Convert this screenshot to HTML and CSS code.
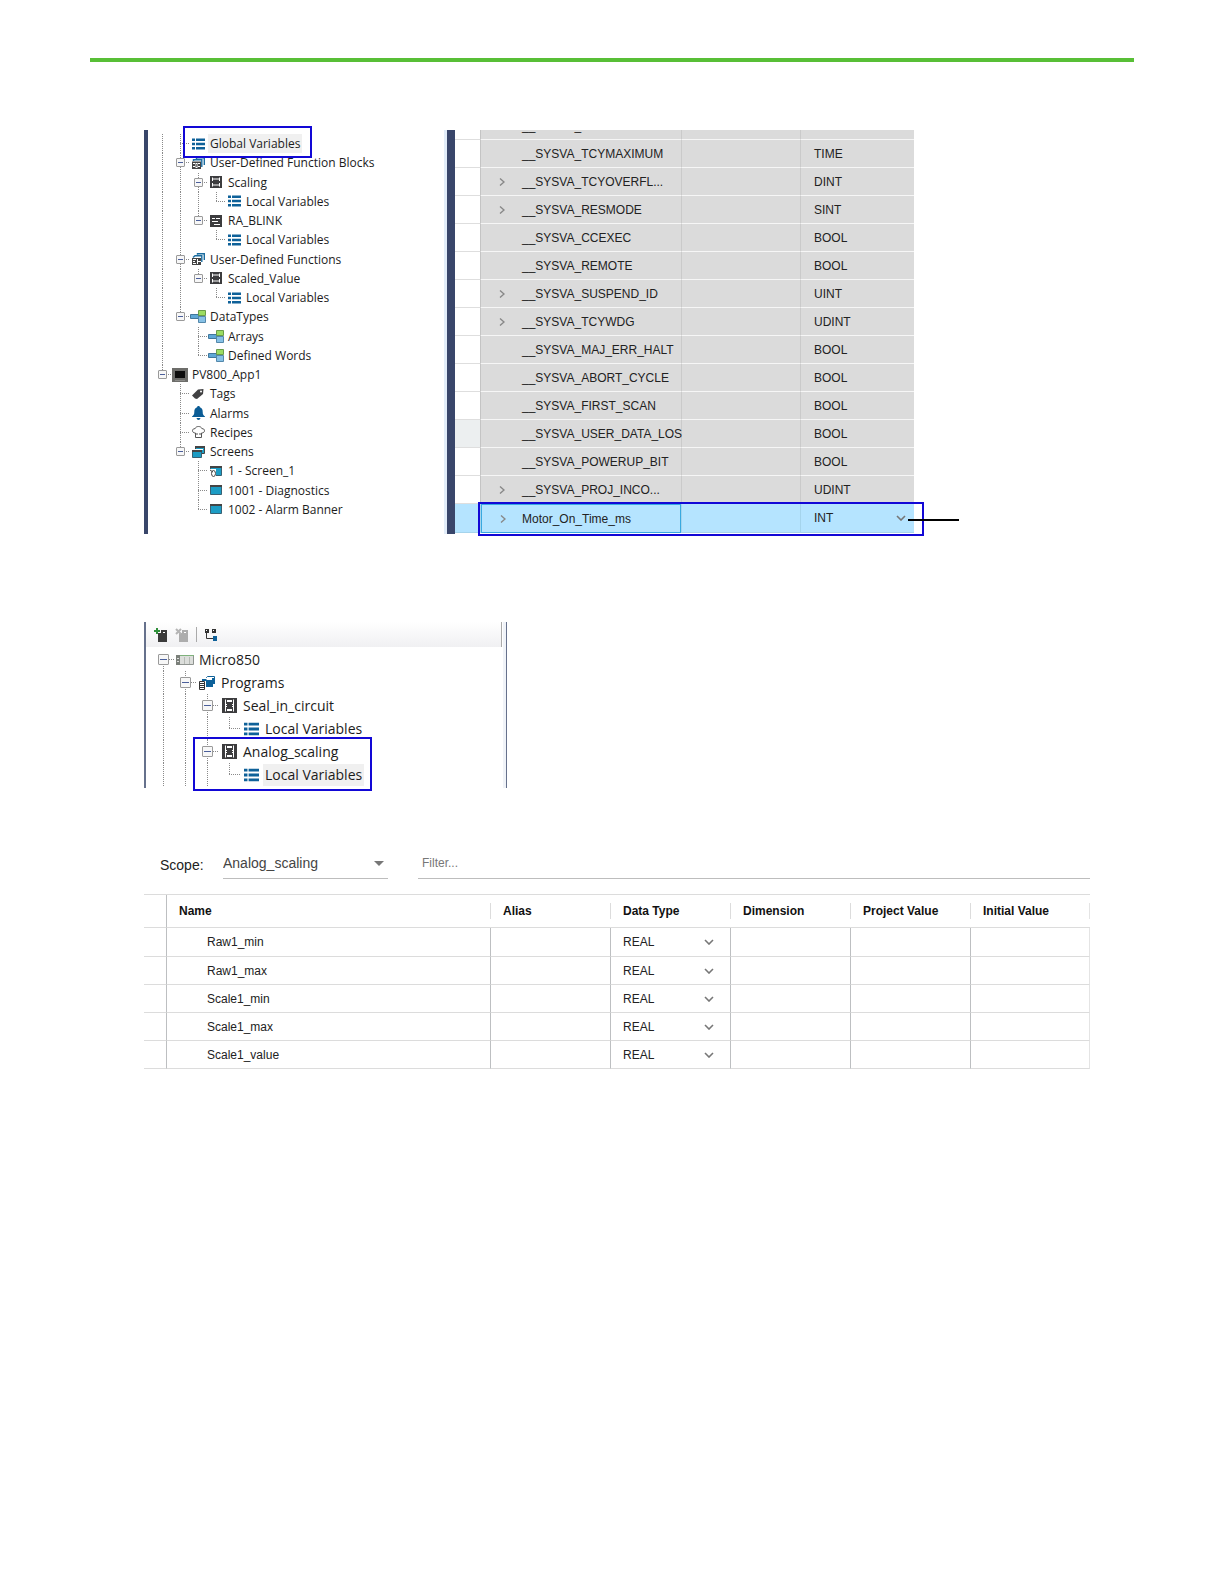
FILE: index.html
```html
<!DOCTYPE html>
<html lang="en">
<head>
  <meta charset="UTF-8">
  <title>Variables</title>
  <link rel="stylesheet" href="styles.css">
</head>
<body>

<!-- icon set -->
<svg class="defs" aria-hidden="true">
  <symbol id="vars" viewBox="0 0 13 12">
    <path fill="#0e6199" d="M0 .500h3V3H0zM4 .500h9V3H4zM0 4.800h3v2.500H0zM4 4.800h9v2.500H4zM0 9h3v2.500H0zM4 9h9v2.500H4z"/>
  </symbol>
  <symbol id="ladder" viewBox="0 0 12 12">
    <path fill="#3c3c3e" d="M0 0h12v12H0z"/>
    <path fill="none" stroke="#fff" d="M2.500 1.500v3.500M9.500 1.500v3.500M2.500 7v3.500M9.500 7v3.500M2.500 3h7M2.500 9h7"/>
  </symbol>
  <symbol id="ladder-large" viewBox="0 0 15 15">
    <path fill="#3c3c3e" d="M0 0h15v15H0z"/>
    <path fill="none" stroke="#fff" d="M3.500 1.500v12M11.500 1.500v12"/>
    <path fill="#fff" d="M5 2h5v2H5zM5 11h5v2H5z"/>
    <path stroke="#fff" d="M4 6.500h1M10 6.500h1M4 8.500h1M10 8.500h1"/>
  </symbol>
  <symbol id="text" viewBox="0 0 12 12">
    <path fill="#3c3c3e" d="M0 0h12v12H0z"/>
    <path stroke="#fff" d="M2 3.500h3M6 3.500h4M2 6.500h6M4 9.500h6"/>
  </symbol>
  <symbol id="blocks" viewBox="0 0 13 12">
    <path fill="none" stroke="#1b6c9f" stroke-width="1.400" d="M4.500 2V.700h7.800V8"/>
    <path fill="none" stroke="#1b6c9f" stroke-width="1.400" d="M1.500 4V2.700h8.300V10"/>
    <path fill="#444" d="M0 4.500h9V12H0z"/>
    <path fill="#fff" d="M1 6h2v1H1zM6 6h2v1H6zM1 9h2v1H1zM6 9h2v1H6zM3.500 6h2v5h-2z"/>
    <path fill="#444" d="M4.200 7h.700v3h-.700z"/>
  </symbol>
  <symbol id="functions" viewBox="0 0 13 12">
    <path fill="none" stroke="#1b6c9f" stroke-width="1.400" d="M5.500 1.700V.700h6.800V7"/>
    <path fill="none" stroke="#1b6c9f" stroke-width="1.400" d="M1 4.500 3 2.700h6.800V9"/>
    <path fill="#444" d="M0 5h9v7H0z"/>
    <path fill="none" stroke="#fff" d="M1 6.500h3M1 8.500h2M1 10.500h3M5.500 6v5M6 8.500h3"/>
  </symbol>
  <symbol id="programs" viewBox="0 0 16 14">
    <path fill="none" stroke="#0e6199" d="M7.500 2V1.500l1-1h7V8"/>
    <path fill="#0e6199" d="M3 3h4l1 1h6v7H7V5H3zM13 2h2v6h-1V4h-1z"/>
    <path fill="#fff" stroke="#333" d="M.500 5.500h5v8h-5z"/>
    <path stroke="#333" d="M1 7.500h4M1 9.500h4M1 11.500h4"/>
  </symbol>
  <symbol id="types" viewBox="0 0 16 13">
    <path fill="none" stroke="#777" d="M7 5.500h3M8.500 3v7"/>
    <path fill="#5fa8d6" stroke="#41779c" d="M.500 4.500h8v4h-8z"/>
    <path fill="#9bdc62" stroke="#6a9c4a" d="M8.500.500h7v5h-7z"/>
    <path fill="#86c1e6" stroke="#5488ab" d="M8.500 6.500h7v6h-7z"/>
  </symbol>
  <symbol id="panel" viewBox="0 0 16 14">
    <path fill="#6d6d6a" d="M0 0h16v14H0z"/>
    <path fill="#0c0c0c" d="M3 3h10v7H3z"/>
    <path stroke="#8b8b88" d="M3 12.500h10"/>
  </symbol>
  <symbol id="tag" viewBox="0 0 12 12">
    <path fill="#414143" d="M11.500 1 11 6 5 11 3 10.500 0 7.500 6 1.500z"/>
    <circle cx="9" cy="3.500" r="1" fill="#fff"/>
  </symbol>
  <symbol id="bell" viewBox="0 0 13 14">
    <path fill="#0b5c95" d="M6.500 0c1 0 1.400.600 1.400 1.300C10 2 10.700 3.600 10.700 6c0 2.600.800 3.500 2.300 4.500V11H0v-.500C1.500 9.500 2.300 8.600 2.300 6c0-2.400.700-4 2.800-4.700C5.100.600 5.500 0 6.500 0zM4.500 12h4c-.300 1.300-1 2-2 2s-1.700-.700-2-2z"/>
  </symbol>
  <symbol id="chef" viewBox="0 0 13 12">
    <path fill="#fff" stroke="#555" d="M3.500 11.500V7C1.500 7 .500 6 .500 4.700.500 3.300 1.700 2.500 3 2.700 3.500 1.300 4.800.500 6.500.500S9.500 1.300 10 2.700c1.300-.200 2.500.600 2.500 2C12.500 6 11.500 7 9.500 7v4.500zM5 7v2M8 7v2"/>
  </symbol>
  <symbol id="screens" viewBox="0 0 13 12">
    <path fill="#1c9cc4" stroke="#444" d="M3.500.500h9v7h-9z"/>
    <path fill="#444" d="M3 0h10v2H3z"/>
    <path fill="#fff" d="M0 3h11v1H0z"/>
    <path fill="#1c9cc4" stroke="#376173" d="M.500 4.500h9v7h-9z"/>
    <path fill="#444" d="M0 4h10v2H0z"/>
  </symbol>
  <symbol id="screen" viewBox="0 0 12 10">
    <path fill="#1c9cc4" stroke="#376173" d="M.500.500h11v9H.500z"/>
    <path fill="#444" d="M0 0h12v2H0z"/>
  </symbol>
  <symbol id="screen-start" viewBox="0 0 12 12">
    <path fill="#1c9cc4" stroke="#376173" d="M.500 1.500h11v9H.500z"/>
    <path fill="#444" d="M0 1h12v2H0z"/>
    <path fill="#fff" d="M0 4h6v8H0z"/>
    <ellipse cx="3.500" cy="8.500" rx="2" ry="3" fill="none" stroke="#444"/>
    <path stroke="#444" d="m0 5 3 2"/>
  </symbol>
  <symbol id="controller" viewBox="0 0 18 10">
    <path fill="#dcdedb" stroke="#8f9490" d="M.500.500h17v9H.500z"/>
    <path fill="#7b807a" d="M0 0h4v10H0z"/>
    <path stroke="#7fb27c" d="M4 .500h14"/>
    <path stroke="#b6bab5" d="M8.500 2v7M13.500 2v7"/>
    <path stroke="#ddd" d="M1 3.500h2M1 6.500h2"/>
  </symbol>
  <symbol id="add" viewBox="0 0 13 14">
    <path fill="#3b3b3b" d="M4 5h3V2h6v12H4z"/>
    <path fill="#fff" d="M9 4h2v1H9z"/>
    <path fill="none" stroke="#2f8f3a" stroke-width="2" d="M3 0v6M0 3h6"/>
  </symbol>
  <symbol id="remove" viewBox="0 0 13 14">
    <path fill="#adadad" d="M4 5h3V2h6v12H4z"/>
    <path fill="#fff" d="M9 4h2v1H9z"/>
    <path fill="none" stroke="#b5b5b5" stroke-width="2" d="m1 1 5 5M6 1 1 6"/>
  </symbol>
  <symbol id="hierarchy" viewBox="0 0 12 12">
    <path fill="#333" d="M0 0h4v4H0zM7 0h4v4H7z"/>
    <path fill="#fff" d="M1 1h1v1H1zM8 1h1v1H8z"/>
    <path fill="none" stroke="#333" d="M1.500 4v5.500H8"/>
    <path fill="#0e6199" d="M8 7h4v5H8z"/>
  </symbol>
  <symbol id="right" viewBox="0 0 6 8">
    <path fill="none" stroke="#888" stroke-width="1.400" d="m1 .500 4 3.500-4 3.500"/>
  </symbol>
  <symbol id="down" viewBox="0 0 10 6">
    <path fill="none" stroke="#777" stroke-width="1.600" d="m1 1 4 4 4-4"/>
  </symbol>
  <symbol id="caret" viewBox="0 0 10 5">
    <path fill="#777" d="M0 0h10L5 5z"/>
  </symbol>
</svg>

<main class="sheet">
  <div class="rule"></div>
  <div class="content">

    <!-- global variables -->
    <section class="global">
      <div class="tree-pane">
        <ul class="tree">
          <li><i class="v"></i><i class="v h"></i><span class="icon"><svg width="13" height="12"><use href="#vars"/></svg></span><a href="#" class="selected">Global Variables</a></li>
          <li><i class="v"></i><i class="v h"><button aria-label="Collapse"></button></i><span class="icon"><svg width="13" height="12"><use href="#blocks"/></svg></span><a href="#">User-Defined Function Blocks</a></li>
          <li><i class="v"></i><i class="v"></i><i class="v h"><button aria-label="Collapse"></button></i><span class="icon"><svg width="12" height="12"><use href="#ladder"/></svg></span><a href="#">Scaling</a></li>
          <li><i class="v"></i><i class="v"></i><i class="v"></i><i class="end h"></i><span class="icon"><svg width="13" height="12"><use href="#vars"/></svg></span><a href="#">Local Variables</a></li>
          <li><i class="v"></i><i class="v"></i><i class="end h"><button aria-label="Collapse"></button></i><span class="icon"><svg width="12" height="12"><use href="#text"/></svg></span><a href="#">RA_BLINK</a></li>
          <li><i class="v"></i><i class="v"></i><i></i><i class="end h"></i><span class="icon"><svg width="13" height="12"><use href="#vars"/></svg></span><a href="#">Local Variables</a></li>
          <li><i class="v"></i><i class="v h"><button aria-label="Collapse"></button></i><span class="icon"><svg width="13" height="12"><use href="#functions"/></svg></span><a href="#">User-Defined Functions</a></li>
          <li><i class="v"></i><i class="v"></i><i class="end h"><button aria-label="Collapse"></button></i><span class="icon"><svg width="12" height="12"><use href="#ladder"/></svg></span><a href="#">Scaled_Value</a></li>
          <li><i class="v"></i><i class="v"></i><i></i><i class="end h"></i><span class="icon"><svg width="13" height="12"><use href="#vars"/></svg></span><a href="#">Local Variables</a></li>
          <li><i class="v"></i><i class="end h"><button aria-label="Collapse"></button></i><span class="icon"><svg width="16" height="13"><use href="#types"/></svg></span><a href="#">DataTypes</a></li>
          <li><i class="v"></i><i></i><i class="v h"></i><span class="icon"><svg width="16" height="13"><use href="#types"/></svg></span><a href="#">Arrays</a></li>
          <li><i class="v"></i><i></i><i class="end h"></i><span class="icon"><svg width="16" height="13"><use href="#types"/></svg></span><a href="#">Defined Words</a></li>
          <li><i class="end h"><button aria-label="Collapse"></button></i><span class="icon"><svg width="16" height="14"><use href="#panel"/></svg></span><a href="#">PV800_App1</a></li>
          <li><i></i><i class="v h"></i><span class="icon"><svg width="12" height="12"><use href="#tag"/></svg></span><a href="#">Tags</a></li>
          <li><i></i><i class="v h"></i><span class="icon"><svg width="13" height="14"><use href="#bell"/></svg></span><a href="#">Alarms</a></li>
          <li><i></i><i class="v h"></i><span class="icon"><svg width="13" height="12"><use href="#chef"/></svg></span><a href="#">Recipes</a></li>
          <li><i></i><i class="end h"><button aria-label="Collapse"></button></i><span class="icon"><svg width="13" height="12"><use href="#screens"/></svg></span><a href="#">Screens</a></li>
          <li><i></i><i></i><i class="v h"></i><span class="icon"><svg width="12" height="12"><use href="#screen-start"/></svg></span><a href="#">1 - Screen_1</a></li>
          <li><i></i><i></i><i class="v h"></i><span class="icon"><svg width="12" height="10"><use href="#screen"/></svg></span><a href="#">1001 - Diagnostics</a></li>
          <li><i></i><i></i><i class="end h"></i><span class="icon"><svg width="12" height="10"><use href="#screen"/></svg></span><a href="#">1002 - Alarm Banner</a></li>
        </ul>
      </div>

      <div class="table-pane">
        <table class="system">
          <colgroup><col class="gutter"><col class="open"><col><col class="alias"><col class="type"></colgroup>
          <tbody>
            <tr><td></td><td></td><td>__SYSVA_</td><td></td><td></td></tr>
            <tr><td></td><td></td><td>__SYSVA_TCYMAXIMUM</td><td></td><td>TIME</td></tr>
            <tr><td></td><td><button aria-label="Expand"><svg width="6" height="8"><use href="#right"/></svg></button></td><td>__SYSVA_TCYOVERFL...</td><td></td><td>DINT</td></tr>
            <tr><td></td><td><button aria-label="Expand"><svg width="6" height="8"><use href="#right"/></svg></button></td><td>__SYSVA_RESMODE</td><td></td><td>SINT</td></tr>
            <tr><td></td><td></td><td>__SYSVA_CCEXEC</td><td></td><td>BOOL</td></tr>
            <tr><td></td><td></td><td>__SYSVA_REMOTE</td><td></td><td>BOOL</td></tr>
            <tr><td></td><td><button aria-label="Expand"><svg width="6" height="8"><use href="#right"/></svg></button></td><td>__SYSVA_SUSPEND_ID</td><td></td><td>UINT</td></tr>
            <tr><td></td><td><button aria-label="Expand"><svg width="6" height="8"><use href="#right"/></svg></button></td><td>__SYSVA_TCYWDG</td><td></td><td>UDINT</td></tr>
            <tr><td></td><td></td><td>__SYSVA_MAJ_ERR_HALT</td><td></td><td>BOOL</td></tr>
            <tr><td></td><td></td><td>__SYSVA_ABORT_CYCLE</td><td></td><td>BOOL</td></tr>
            <tr><td></td><td></td><td>__SYSVA_FIRST_SCAN</td><td></td><td>BOOL</td></tr>
            <tr class="hover"><td></td><td></td><td>__SYSVA_USER_DATA_LOS</td><td></td><td>BOOL</td></tr>
            <tr><td></td><td></td><td>__SYSVA_POWERUP_BIT</td><td></td><td>BOOL</td></tr>
            <tr><td></td><td><button aria-label="Expand"><svg width="6" height="8"><use href="#right"/></svg></button></td><td>__SYSVA_PROJ_INCO...</td><td></td><td>UDINT</td></tr>
            <tr class="current">
              <td></td>
              <td><button aria-label="Expand"><svg width="6" height="8"><use href="#right"/></svg></button></td>
              <td>Motor_On_Time_ms</td>
              <td></td>
              <td><span class="pick"><select aria-label="Data type of Motor_On_Time_ms"><option>INT</option></select><svg width="10" height="6"><use href="#down"/></svg></span></td>
            </tr>
          </tbody>
        </table>
      </div>
      <div class="callout callout-global"></div>
      <div class="callout callout-motor"></div>
      <div class="leader"></div>
    </section>

    <!-- local variables of one program -->
    <section class="project">
      <div class="toolbar">
        <button aria-label="Add device"><svg width="13" height="14"><use href="#add"/></svg></button>
        <button aria-label="Remove device" disabled><svg width="13" height="14"><use href="#remove"/></svg></button>
        <span class="separator"></span>
        <button aria-label="Show hierarchy"><svg width="12" height="12"><use href="#hierarchy"/></svg></button>
      </div>
      <ul class="tree large">
        <li><i class="below h"><button aria-label="Collapse"></button></i><span class="icon"><svg width="18" height="10"><use href="#controller"/></svg></span><a href="#">Micro850</a></li>
        <li><i class="v"></i><i class="v h"><button aria-label="Collapse"></button></i><span class="icon"><svg width="16" height="14"><use href="#programs"/></svg></span><a href="#">Programs</a></li>
        <li><i class="v"></i><i class="v"></i><i class="v h"><button aria-label="Collapse"></button></i><span class="icon"><svg width="15" height="15"><use href="#ladder-large"/></svg></span><a href="#">Seal_in_circuit</a></li>
        <li><i class="v"></i><i class="v"></i><i class="v"></i><i class="end h"></i><span class="icon"><svg width="15" height="14"><use href="#vars"/></svg></span><a href="#">Local Variables</a></li>
        <li><i class="v"></i><i class="v"></i><i class="v h"><button aria-label="Collapse"></button></i><span class="icon"><svg width="15" height="15"><use href="#ladder-large"/></svg></span><a href="#">Analog_scaling</a></li>
        <li><i class="v"></i><i class="v"></i><i class="v"></i><i class="end h"></i><span class="icon"><svg width="15" height="14"><use href="#vars"/></svg></span><a href="#" class="selected">Local Variables</a></li>
      </ul>
      <div class="callout callout-local"></div>
    </section>

    <!-- variable table -->
    <section class="local">
      <div class="filters">
        <label for="scope">Scope:</label>
        <span class="pick scope"><select id="scope"><option>Analog_scaling</option></select><svg width="10" height="5"><use href="#caret"/></svg></span>
        <input type="text" placeholder="Filter..." aria-label="Filter">
      </div>
      <table class="variables">
        <colgroup><col class="gutter"><col><col class="field"><col class="field"><col class="field"><col class="field"><col class="field"></colgroup>
        <thead>
          <tr><th></th><th><span>Name</span></th><th><span>Alias</span></th><th><span>Data Type</span></th><th><span>Dimension</span></th><th><span>Project Value</span></th><th><span>Initial Value</span></th></tr>
        </thead>
        <tbody>
          <tr><td></td><td>Raw1_min</td><td></td><td><span class="pick"><select aria-label="Data type of Raw1_min"><option>REAL</option></select><svg width="10" height="6"><use href="#down"/></svg></span></td><td></td><td></td><td></td></tr>
          <tr><td></td><td>Raw1_max</td><td></td><td><span class="pick"><select aria-label="Data type of Raw1_max"><option>REAL</option></select><svg width="10" height="6"><use href="#down"/></svg></span></td><td></td><td></td><td></td></tr>
          <tr><td></td><td>Scale1_min</td><td></td><td><span class="pick"><select aria-label="Data type of Scale1_min"><option>REAL</option></select><svg width="10" height="6"><use href="#down"/></svg></span></td><td></td><td></td><td></td></tr>
          <tr><td></td><td>Scale1_max</td><td></td><td><span class="pick"><select aria-label="Data type of Scale1_max"><option>REAL</option></select><svg width="10" height="6"><use href="#down"/></svg></span></td><td></td><td></td><td></td></tr>
          <tr><td></td><td>Scale1_value</td><td></td><td><span class="pick"><select aria-label="Data type of Scale1_value"><option>REAL</option></select><svg width="10" height="6"><use href="#down"/></svg></span></td><td></td><td></td><td></td></tr>
        </tbody>
      </table>
    </section>

  </div>
</main>

</body>
</html>
```
FILE: styles.css
```css
* {
  box-sizing: border-box;
}
body {
  margin: 0;
  background: #fff;
  color: #222;
  font: 12px "Liberation Sans", Arial, sans-serif;
}
.defs {
  display: none;
}
svg {
  display: block;
}
button {
  padding: 0;
  border: 0;
  background: none;
  cursor: pointer;
}
.sheet {
  padding: 58px 90px;
}
.rule {
  height: 4px;
  background: #58bf36;
}
.content {
  padding: 68px 44px 0 54px;
}

/* tree */
.tree {
  --cell: 18px;
  display: grid;
  grid-auto-rows: 1fr;
  margin: 0;
  padding: 4px 0 15px 5px;
  list-style: none;
  font: 12px "Open Sans", "Segoe UI", sans-serif;
}
.tree li {
  display: flex;
  align-items: center;
  white-space: nowrap;
}
.tree a {
  margin-left: 1px;
  padding: 0 2px;
  color: #1c1c1c;
  text-decoration: none;
  line-height: 19px;
}
.tree a.selected {
  background: #f0f0f0;
}
.tree i {
  --dots: #8a8a8a 0 1px, transparent 1px 2px;
  --down: repeating-linear-gradient(var(--dots));
  --across: repeating-linear-gradient(90deg, var(--dots));
  display: flex;
  flex: none;
  align-self: stretch;
  align-items: center;
  justify-content: center;
  width: var(--cell);
  background-repeat: no-repeat;
}
.tree i.v {
  background-image: var(--down);
  background-position: center;
  background-size: 1px 100%;
}
.tree i.v.h,
.tree i.end,
.tree i.below {
  background-image: var(--down), var(--across);
  background-position: center, right center;
  background-size: 1px 100%, 50% 1px;
}
.tree i.end {
  background-position: center top, right center;
  background-size: 1px 50%, 50% 1px;
}
.tree i.below {
  background-position: center bottom, right center;
  background-size: 1px 50%, 50% 1px;
}
.tree i button {
  width: 9px;
  height: 9px;
  border: 1px solid #9a9a9a;
  border-radius: 1px;
  background: linear-gradient(#4b5f9b, #4b5f9b) center / 5px 1px no-repeat #f7f7f7;
}
.tree .icon {
  display: flex;
  flex: none;
  justify-content: center;
  width: var(--cell);
}
.tree.large {
  --cell: 22px;
  grid-auto-rows: 23px;
  padding: 1px 0 2px 6px;
  font-size: 14px;
}
.tree.large a {
  line-height: 22px;
}
.tree.large i button {
  width: 11px;
  height: 11px;
  background-size: 7px 1px;
}

/* boxes drawn over the panes */
.callout {
  position: absolute;
  border: 2px solid #1208d6;
  pointer-events: none;
}
.callout-global {
  top: -4px;
  left: 39px;
  width: 129px;
  height: 32px;
}
.callout-motor {
  right: -10px;
  bottom: -2px;
  width: 446px;
  height: 34px;
}
.callout-local {
  left: 47px;
  bottom: -3px;
  width: 179px;
  height: 54px;
}
.leader {
  position: absolute;
  right: -45px;
  bottom: 13px;
  width: 51px;
  height: 2px;
  background: #000;
}

/* global variables */
.global {
  position: relative;
  display: flex;
  max-width: 770px;
}
.tree-pane {
  display: grid;
  flex: 0 0 311px;
  border-left: 4px solid #39466a;
  border-right: 8px solid #39466a;
  box-shadow: inset -3px 0 #e2edf9;
}
.table-pane {
  flex: 1;
  overflow: hidden;
  padding-bottom: 1px;
}
table {
  width: 100%;
  table-layout: fixed;
  border-spacing: 0;
}
td {
  padding: 0;
  white-space: nowrap;
}
.system {
  margin-top: -18px;
}
.system .gutter {
  width: 26px;
}
.system .open {
  width: 41px;
}
.system .alias {
  width: 120px;
}
.system .type {
  width: 113px;
}
.system td {
  height: 28px;
  border-bottom: 1px solid #f6f6f6;
  background: #dbdbdb;
}
.system td:first-child {
  border-right: 1px solid #c4c4c4;
  border-bottom-color: #dedede;
  background: #fff;
}
.system td:nth-child(4) {
  border-left: 1px solid #cacaca;
  border-right: 1px solid #cacaca;
}
.system td:last-child {
  padding-left: 13px;
}
.system td > button {
  display: block;
  margin-left: 18px;
}
.system .hover td:first-child {
  background: #eceff0;
}
.system .current td,
.system .current td:first-child {
  height: 29px;
  border-color: #a5d4ec;
  background: #b5e4ff;
}
.system .current td:nth-child(2),
.system .current td:nth-child(3) {
  border: 1px solid #38a9e0;
}
.system .current td:nth-child(2) {
  border-right: 0;
}
.system .current td:nth-child(3) {
  border-left: 0;
}

/* select with its own arrow */
.pick {
  display: grid;
  align-items: center;
}
.pick select,
.pick svg {
  grid-area: 1 / 1;
}
.pick svg {
  justify-self: end;
  margin-right: 8px;
  pointer-events: none;
}
.pick select {
  width: 100%;
  padding: 0;
  border: 0;
  appearance: none;
  background: none;
  color: inherit;
  font: inherit;
}

/* project tree */
.project {
  position: relative;
  max-width: 363px;
  margin-top: 88px;
  border-left: 2px solid #66718c;
  border-right: 1px solid #66718c;
  box-shadow: inset -3px 0 #f0f3f8;
}
.toolbar {
  display: flex;
  align-items: center;
  gap: 8px;
  height: 25px;
  margin-right: 4px;
  padding-left: 8px;
  border-right: 1px solid #aaa;
  background: linear-gradient(#fff, #f0f0f2);
}
.separator {
  width: 1px;
  height: 15px;
  background: #aaa;
}

/* local variables */
.local {
  margin-top: 60px;
}
.filters {
  display: flex;
  align-items: stretch;
  height: 31px;
  padding-left: 16px;
  font-size: 14px;
}
.filters label {
  flex: 0 0 63px;
  padding-top: 9px;
}
.filters .scope {
  flex: 0 0 165px;
  margin-right: 30px;
  border-bottom: 1px solid #bdbdbd;
  color: #444;
}
.scope svg {
  margin-right: 4px;
}
.filters input {
  flex: 1;
  min-width: 0;
  padding: 0 4px;
  border: 0;
  border-bottom: 1px solid #bdbdbd;
  font: 12px "Liberation Sans", Arial, sans-serif;
}
.filters input::placeholder {
  color: #777;
}
.variables {
  margin-top: 15px;
  border-top: 1px solid #dcdcdc;
}
.variables .gutter {
  width: 22px;
}
.variables .field {
  width: 120px;
}
.variables th {
  height: 33px;
  padding: 0;
  border-bottom: 1px solid #dcdcdc;
  color: #111;
  text-align: left;
}
.variables th span {
  display: block;
  padding-left: 12px;
  border-left: 1px solid #dcdcdc;
  line-height: 16px;
}
.variables th:nth-child(2) {
  border-left: 1px solid #bdbfc1;
}
.variables th:nth-child(2) span {
  border-left: 0;
}
.variables th:last-child span {
  border-right: 1px solid #e4e4e4;
}
.variables td {
  height: 28px;
  border-left: 1px solid #bdbfc1;
  border-bottom: 1px solid #dcdcdc;
}
.variables tbody tr:first-child td {
  height: 29px;
}
.variables td:first-child {
  border-left: 0;
}
.variables td:nth-child(2) {
  padding-left: 40px;
}
.variables td:nth-child(4) {
  padding: 0 8px 0 12px;
}
.variables td:last-child {
  border-right: 1px solid #e4e4e4;
}
```
